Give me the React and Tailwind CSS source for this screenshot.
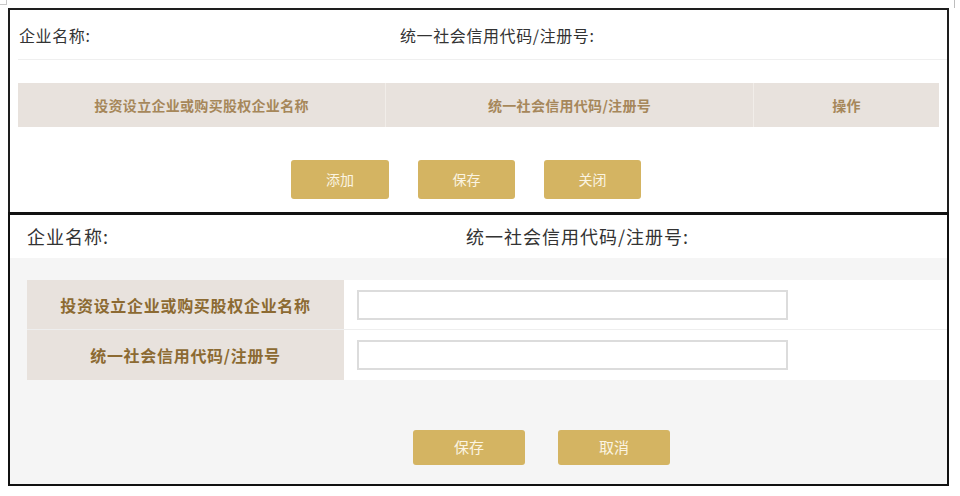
export default function App() {
  const font = { fontFamily: '"Noto Sans CJK SC", "Noto Sans", sans-serif' };

  return (
    <div className="w-[960px] h-[496px] bg-white" style={font}>
      {/* crop marks */}
      <div className="flex justify-between h-[8px]">
        <div className="w-[7px] h-[5px] border-r border-b border-[#c8c8c8]" />
        <div className="w-[6px] h-[8px] border-l border-[#bdbdbd]" />
      </div>

      <div className="ml-[8px] w-[941px]">
        {/* top screenshot */}
        <div className="border-t-2 border-l-2 border-r-2 border-[#1e1e1e] h-[204px]">
          <div className="ml-[8px] h-[50px] flex items-center border-b border-[#efefef] text-[16px] tracking-[0.6px] text-[#333]">
            <div className="w-[382px] pl-[1px]">企业名称:</div>
            <div>统一社会信用代码/注册号:</div>
          </div>

          <div className="mt-[23px] mx-[8px] h-[44px] flex bg-[#e8e2dd] text-[14px] tracking-[0.3px] font-bold text-[#a6875a]">
            <div className="w-[368px] flex items-center justify-center border-r border-[#f1ede9]">
              投资设立企业或购买股权企业名称
            </div>
            <div className="w-[368px] flex items-center justify-center border-r border-[#f1ede9]">
              统一社会信用代码/注册号
            </div>
            <div className="flex-1 flex items-center justify-center">操作</div>
          </div>

          <div className="mt-[33px] ml-[281px] flex gap-[29px]">
            <button className="w-[98px] h-[39px] rounded-[3px] bg-[#d4b462] text-[14px] text-[#fbf4e2]">添加</button>
            <button className="w-[97px] h-[39px] rounded-[3px] bg-[#d4b462] text-[14px] text-[#fbf4e2]">保存</button>
            <button className="w-[97px] h-[39px] rounded-[3px] bg-[#d4b462] text-[14px] text-[#fbf4e2]">关闭</button>
          </div>
        </div>

        {/* bottom screenshot */}
        <div className="border-t-[3px] border-l-2 border-r-2 border-b-2 border-[#111] h-[274px] bg-[#f5f5f5] flex flex-col">
          <div className="h-[43px] bg-white flex items-center text-[18px] tracking-[1px] text-[#333] pl-[17px]">
            <div className="w-[439px]">企业名称:</div>
            <div>统一社会信用代码/注册号:</div>
          </div>

          <div className="mt-[22px] ml-[17px]">
            <div className="flex h-[50px] border-b border-[#eeeeee]">
              <div className="w-[317px] bg-[#e8e2dd] flex items-center justify-center text-[16px] tracking-[0.7px] font-bold text-[#8c6a32]">
                投资设立企业或购买股权企业名称
              </div>
              <div className="flex-1 bg-white flex items-center pl-[13px]">
                <input className="w-[431px] h-[30px] border-2 border-[#dcdcdc] bg-white outline-none" />
              </div>
            </div>
            <div className="flex h-[50px]">
              <div className="w-[317px] bg-[#e8e2dd] flex items-center justify-center text-[16px] tracking-[0.7px] font-bold text-[#8c6a32]">
                统一社会信用代码/注册号
              </div>
              <div className="flex-1 bg-white flex items-center pl-[13px]">
                <input className="w-[431px] h-[30px] border-2 border-[#dcdcdc] bg-white outline-none" />
              </div>
            </div>
          </div>

          <div className="mt-[50px] ml-[403px] flex gap-[33px]">
            <button className="w-[112px] h-[35px] rounded-[3px] bg-[#d4b462] text-[15px] text-[#fbf4e2]">保存</button>
            <button className="w-[112px] h-[35px] rounded-[3px] bg-[#d4b462] text-[15px] text-[#fbf4e2]">取消</button>
          </div>
        </div>
      </div>
    </div>
  );
}
